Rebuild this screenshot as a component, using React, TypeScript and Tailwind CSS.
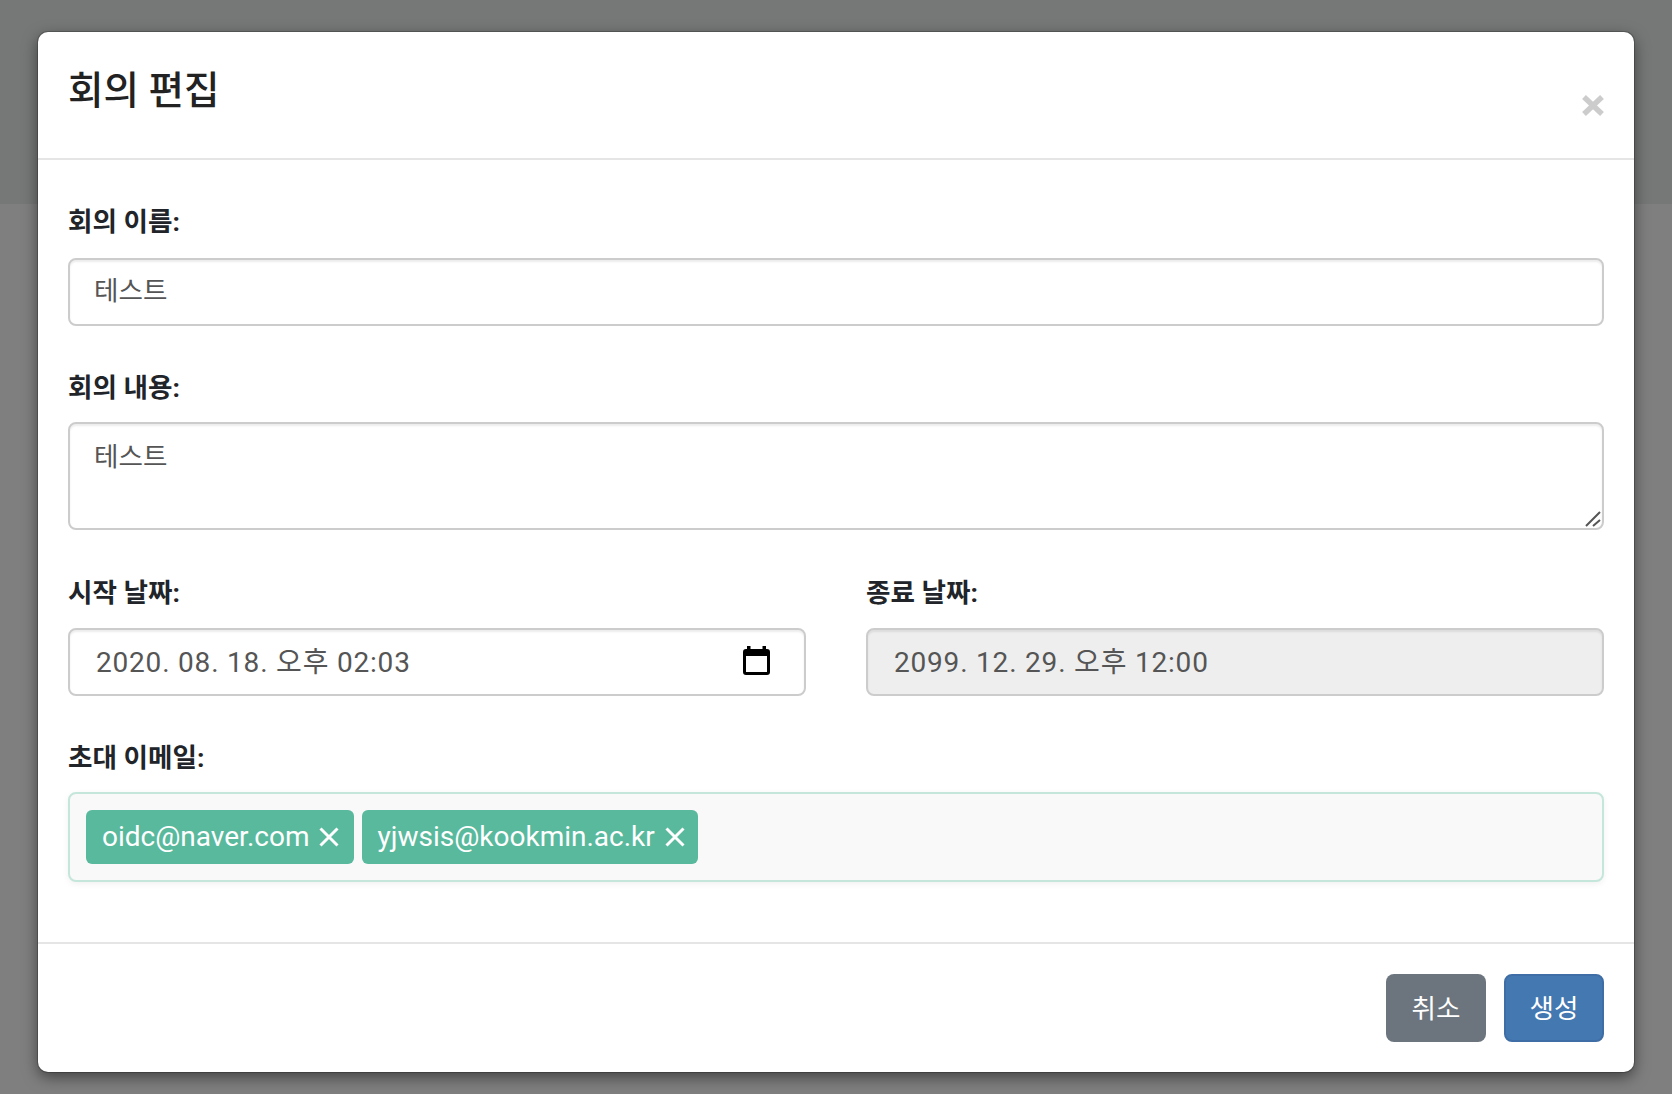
const ko = "font-['Roboto','Noto_Sans_CJK_KR',sans-serif]";
const field = "border-2 border-[#cccccc] rounded-[8px] shadow-[inset_0_2px_2px_rgba(0,0,0,0.075)] text-[#555555]";
function Label({ children, gap }: { children: string; gap: string }) {
  return <label className={`block text-[26.6px] leading-[36px] font-bold text-[#212529] h-[36px] ${gap}`}>{children}</label>;
}
function Chip({ text, pad }: { text: string; pad: string }) {
  return (
    <span className={`flex items-center h-[54px] rounded-[6px] bg-[#58b99d] text-white text-[28px] gap-[10px] ${pad}`}>
      {text}
      <svg width="20" height="20" viewBox="0 0 20 20" fill="none" stroke="white" strokeWidth="3"><path d="M1.5 1.5L18.5 18.5M18.5 1.5L1.5 18.5" /></svg>
    </span>
  );
}
export default function App() {
  return (
    <div className={`w-[1672px] h-[1094px] overflow-hidden flex flex-col relative bg-[#7f7f7f] ${ko}`}>
      <div className="h-[204px] bg-[#767877]" />
      <div className="absolute left-[38px] top-[32px] w-[1596px] h-[1040px] bg-white rounded-[10px] shadow-[0_5px_15px_rgba(0,0,0,0.5),0_0_0_1px_rgba(0,0,0,0.2)] flex flex-col">
        <div className="h-[128px] border-b-2 border-[#e5e5e5] px-[30px] flex justify-between">
          <h1 className="text-[38.6px] leading-[56px] mt-[31px] font-medium text-[#222222]">회의 편집</h1>
          <svg className="mt-[63px]" width="22" height="21" viewBox="0 0 22 21" fill="none" stroke="#cccccc" strokeWidth="5.5"><path d="M2 2L20 19M20 2L2 19" /></svg>
        </div>
        <div className="px-[30px] pt-[44px] flex-1 flex flex-col">
          <Label gap="mb-[18px]">회의 이름:</Label>
          <div className={`h-[68px] px-[24px] text-[26.6px] leading-[62px] ${field}`}>테스트</div>
          <div className="h-[44px]" />
          <Label gap="mb-[16px]">회의 내용:</Label>
          <div className={`h-[108px] px-[24px] text-[26.6px] leading-[66px] relative ${field}`}>
            테스트
            <svg className="absolute right-[1px] bottom-[1px]" width="17" height="17" viewBox="0 0 17 17" fill="none" stroke="#555555" strokeWidth="2"><path d="M2 16L16 2M9 16L16 10" /></svg>
          </div>
          <div className="h-[45px]" />
          <div className="flex gap-[60px]">
            <div className="flex-1">
              <Label gap="mb-[17px]">시작 날짜:</Label>
              <div className={`h-[68px] pl-[26px] pr-[34px] pt-[2px] text-[28px] tracking-[0.8px] flex items-center justify-between ${field}`}>
                2020. 08. 18. 오후 02:03
                <svg className="-mt-[6px]" width="27" height="29" viewBox="0 0 27 29"><path fillRule="evenodd" fill="black" d="M4 0h3.5v3h12V0H23v3h1a3 3 0 0 1 3 3v20a3 3 0 0 1-3 3H3a3 3 0 0 1-3-3V6a3 3 0 0 1 3-3h1zM3 10v16h21V10z" /></svg>
              </div>
            </div>
            <div className="flex-1">
              <Label gap="mb-[17px]">종료 날짜:</Label>
              <div className={`h-[68px] pl-[26px] pt-[2px] bg-[#eeeeee] text-[28px] tracking-[0.8px] flex items-center ${field}`}>2099. 12. 29. 오후 12:00</div>
            </div>
          </div>
          <div className="h-[44px]" />
          <Label gap="mb-[16px]">초대 이메일:</Label>
          <div className="h-[90px] border-2 border-[#c4e6db] rounded-[8px] bg-[#f9f9f9] shadow-[0_2px_6px_rgba(0,0,0,0.06)] flex items-center px-[16px] gap-[8px]">
            <Chip text="oidc@naver.com" pad="pl-[16px] pr-[15px]" />
            <Chip text="yjwsis@kookmin.ac.kr" pad="pl-[15px] pr-[13px]" />
          </div>
        </div>
        <div className="h-[130px] border-t-2 border-[#e5e5e5] flex justify-end items-start pt-[30px] gap-[18px] px-[30px]">
          <button className="h-[68px] w-[100px] rounded-[8px] bg-[#6c757d] text-white text-[26.6px] pt-[1px]">취소</button>
          <button className="h-[68px] w-[100px] rounded-[8px] bg-[#4478b0] border-2 border-[#3f6ea6] text-white text-[26.6px] pt-[1px]">생성</button>
        </div>
      </div>
    </div>
  );
}
